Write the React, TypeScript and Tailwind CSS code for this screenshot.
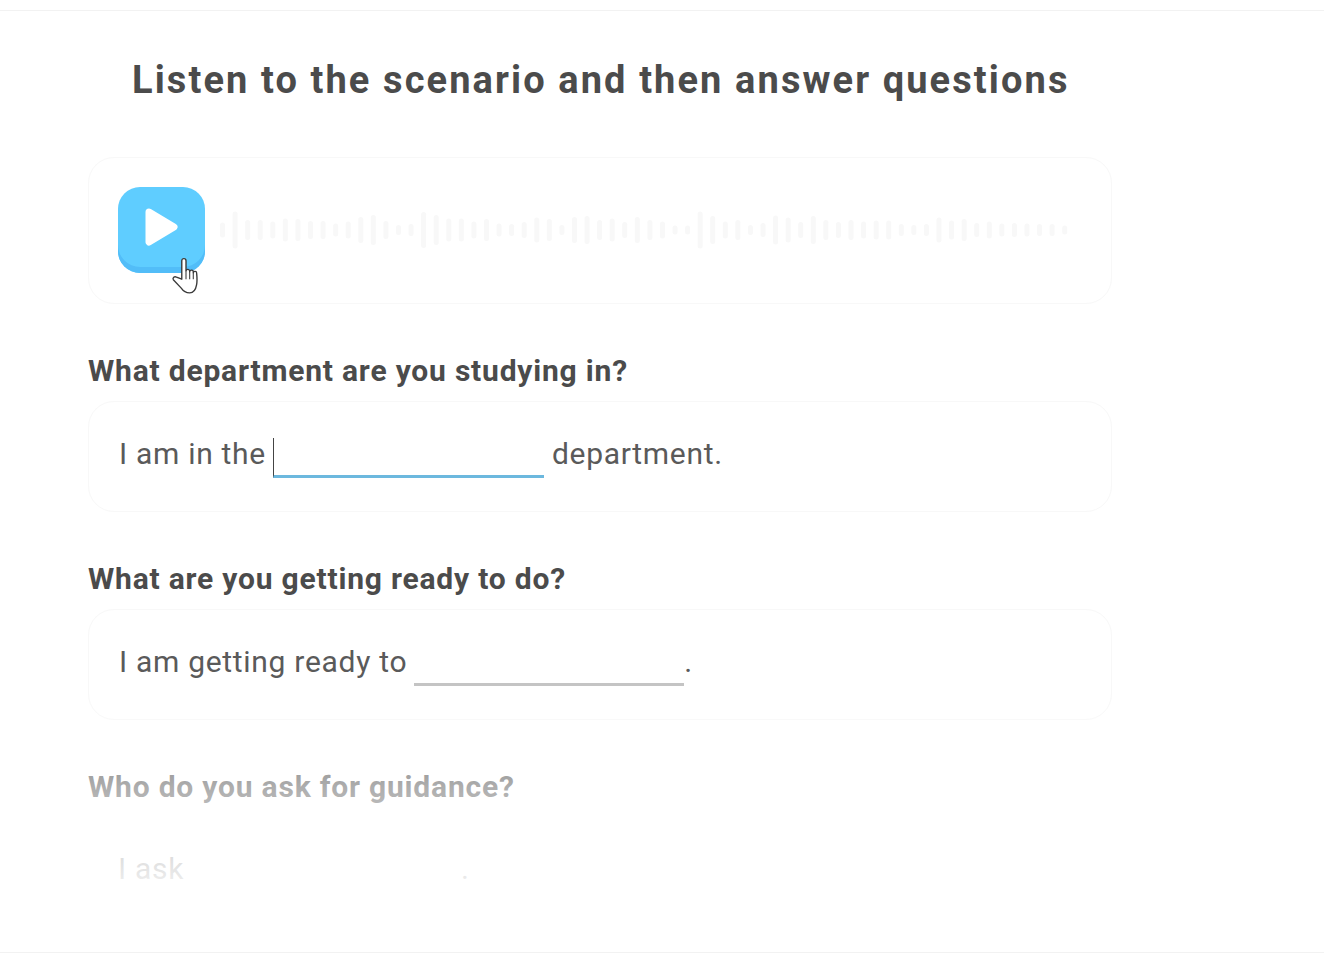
const bars = [
  15, 37, 20, 20, 17, 23, 22, 18, 18, 13, 17, 26, 30, 18, 10, 12, 36, 30, 23, 23, 17, 22,
  13, 12, 16, 25, 22, 10, 26, 28, 20, 23, 16, 26, 20, 17, 9, 9, 37, 28, 17, 20, 10, 14, 29,
  25, 16, 28, 20, 16, 20, 17, 19, 19, 12, 10, 12, 25, 19, 22, 14, 17, 13, 14, 13, 12, 12, 9,
];

function PlayButton() {
  return (
    <div className="relative mb-[2px] h-[86px] w-[87px] shrink-0">
      <div className="flex h-full w-full items-center justify-center rounded-[22px] bg-[#5fcdff] shadow-[inset_0_-6px_0_#52bdf8]">
        <svg width="33" height="38" viewBox="0 0 33 38" className="mb-[6px]">
          <path d="M4 4 L29 19 L4 34 Z" fill="#fff" stroke="#fff" strokeWidth="7" strokeLinejoin="round" />
        </svg>
      </div>
      {/* cursor */}
      <svg width="30" height="38" viewBox="0 0 28 36" className="absolute left-[53px] top-[70px]">
        <path
          d="M10 21V3.500a2 2 0 0 1 4 0V13a1.800 1.800 0 0 1 3.500.3V14a1.700 1.700 0 0 1 3.400.300V15a1.600 1.600 0 0 1 3.200.500c.4 4 .5 8-.1 11-.7 4-2.500 7.500-6.500 7.500-3.500 0-6-1.500-8-4.500L2 21.500c-1-1.700 1-3.500 3-2.500z"
          fill="#fff"
          stroke="#3a3a3a"
          strokeWidth="1.300"
          strokeLinejoin="round"
        />
        <path d="M14 13v8M17.500 14v7M20.900 15v6" stroke="#3a3a3a" strokeWidth="1" fill="none" />
      </svg>
    </div>
  );
}

function Waveform() {
  return (
    <svg width="852" height="40" viewBox="0 0 852 40" className="mb-[2px] ml-[15px]">
      {bars.map((h, i) => (
        <rect key={i} x={i * 12.57} y={20 - h / 2} width="5" height={h} rx="2.500" fill="#f8f8f8" />
      ))}
    </svg>
  );
}

function Label({ children }: { children: React.ReactNode }) {
  return (
    <h2 className="mt-[51px] h-[32px] text-[30px] font-bold leading-[32px] tracking-[0.8px] text-[#4b4b4b]">
      {children}
    </h2>
  );
}

export default function App() {
  return (
    <main className="relative h-[954px] overflow-hidden bg-white font-['Roboto',sans-serif]">
      <div className="mt-[10px] border-t border-[#f2f2f2]" />

      <section className="ml-[88px] flex h-[941px] w-[1024px] flex-col">
        <h1 className="ml-[44px] mt-[47px] h-[44px] text-[38px] font-bold leading-[44px] tracking-[2.1px] text-[#4b4b4b]">
          Listen to the scenario and then answer questions
        </h1>

        <div className="mt-[55px] flex h-[147px] items-center rounded-[26px] border border-[#f8f8f8] px-[29px]">
          <PlayButton />
          <Waveform />
        </div>

        <Label>What department are you studying in?</Label>
        <div className="mt-[14px] flex h-[111px] items-center rounded-[26px] border border-[#f8f8f8] px-[30px] text-[30px] tracking-[0.7px] text-[#5a5a5a]">
          <span className="mb-[6px]">I am in the</span>
          <span className="ml-[7px] mt-[3px] h-[40px] w-[271px] border-b-[3px] border-l border-b-[#6cb8de] border-l-[#444]" />
          <span className="mb-[6px] ml-[8px]">department.</span>
        </div>

        <Label>What are you getting ready to do?</Label>
        <div className="mt-[14px] flex h-[111px] items-center rounded-[26px] border border-[#f8f8f8] px-[30px] text-[30px] tracking-[0.7px] text-[#5a5a5a]">
          <span className="mb-[6px]">I am getting ready to</span>
          <span className="ml-[7px] mt-[3px] h-[40px] w-[270px] border-b-[3px] border-b-[#c4c4c4]" />
          <span className="mb-[6px]">.</span>
        </div>

        <Label>Who do you ask for guidance?</Label>
        <div className="mt-[14px] flex h-[111px] items-center rounded-[26px] px-[30px] text-[30px] tracking-[0.7px] text-[#5a5a5a]">
          <span className="mb-[8px]">I ask</span>
          <span className="ml-[7px] mt-[3px] h-[40px] w-[270px]" />
          <span className="mb-[8px]">.</span>
        </div>
      </section>

      {/* list fades out towards the bottom bar */}
      <div className="pointer-events-none absolute inset-x-0 bottom-[2px] h-[265px] bg-gradient-to-b from-white/0 via-white/55 via-38% to-white to-85%" />
      <div className="absolute inset-x-0 bottom-[1px] border-t border-[#f2f2f2]" />
    </main>
  );
}
